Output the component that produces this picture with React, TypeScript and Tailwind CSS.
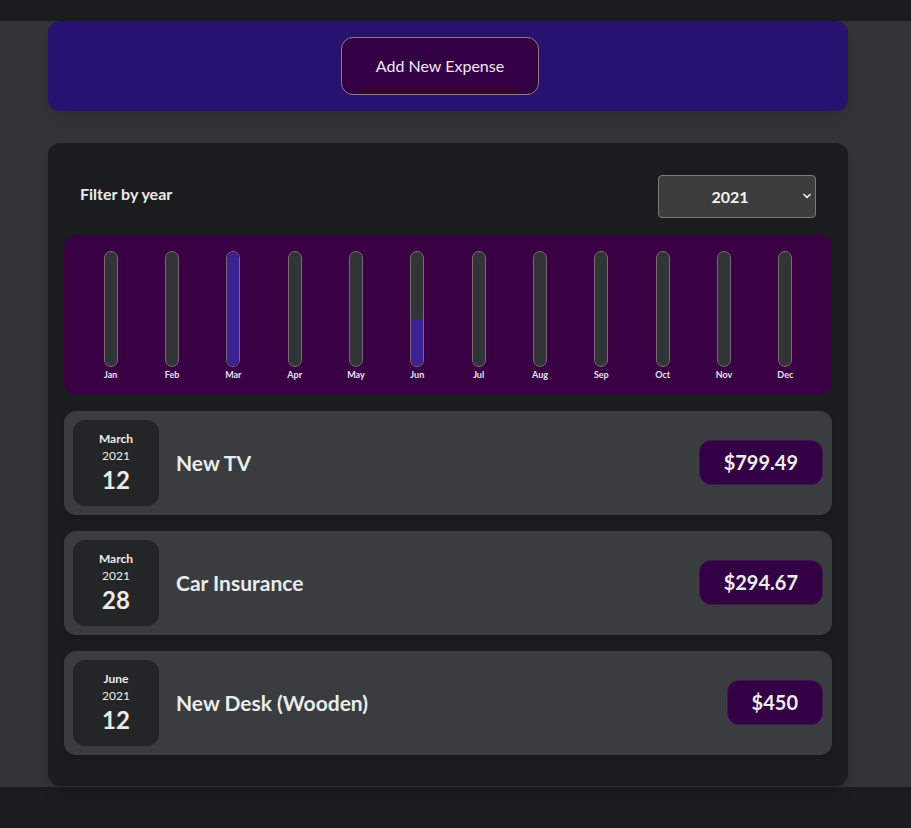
import { useState } from "react";

const months = ["Jan", "Feb", "Mar", "Apr", "May", "Jun", "Jul", "Aug", "Sep", "Oct", "Nov", "Dec"];

const expenses = [
    { id: "e1", title: "New TV", amount: 799.49, date: new Date(2021, 2, 12) },
    { id: "e2", title: "Car Insurance", amount: 294.67, date: new Date(2021, 2, 28) },
    { id: "e3", title: "New Desk (Wooden)", amount: 450, date: new Date(2021, 5, 12) },
];

function ExpenseDate({ date }: { date: Date }) {
    const month = date.toLocaleString("en-US", { month: "long" });
    return (
        <div className="flex h-[86px] w-[86px] shrink-0 flex-col items-center justify-center rounded-xl bg-[#242526] text-[#ececec]">
            <div className="text-[12px] font-bold leading-[16px]">{month}</div>
            <div className="text-[12px] leading-[18px]">{date.getFullYear()}</div>
            <div className="text-[24px] font-bold leading-[30px]">{date.getDate()}</div>
        </div>
    );
}

function ExpenseItem({ title, amount, date }: { title: string; amount: number; date: Date }) {
    return (
        <div className="flex items-center rounded-xl bg-[#393d40] p-[9px] shadow-md">
            <ExpenseDate date={date} />
            <h2 className="ml-[17px] flex-1 text-[21px] font-bold text-[#ececec]">{title}</h2>
            <div className="rounded-xl border border-[#3c1a4a] bg-[#330046] px-6 py-[9px] text-[20px] font-bold leading-[25px] text-[#ececec]">
                ${amount}
            </div>
        </div>
    );
}

function Chart() {
    const totals = months.map((_, i) =>
        expenses.filter((e) => e.date.getMonth() === i).reduce((s, e) => s + e.amount, 0)
    );
    const max = Math.max(...totals);

    return (
        <div className="grid grid-cols-12 rounded-xl bg-[#3a0044] px-4 pt-4 pb-[13px]">
            {months.map((m, i) => (
                <div key={m} className="flex flex-col items-center">
                    <div className="flex h-[116px] w-[14px] flex-col justify-end overflow-hidden rounded-full border border-[#7c6a72] bg-[#323537]">
                        <div className="bg-[#3b2192]" style={{ height: `${Math.round((totals[i] / max) * 100)}%` }} />
                    </div>
                    <div className="mt-[1px] text-[9px] font-bold text-[#e6e2f2]">{m}</div>
                </div>
            ))}
        </div>
    );
}

export default function App() {
    const [year, setYear] = useState("2021");

    return (
        <div className="min-h-[828px] bg-[#1b1c1e] pt-[21px] pb-[41px] font-['Lato',sans-serif]">
            <div className="bg-[#313537] pb-[1px]">
                {/* New expense */}
                <div className="ml-12 flex h-[90px] w-[800px] items-center justify-center rounded-xl bg-[#27126f] shadow-lg">
                    <button className="mr-4 h-[58px] w-[198px] rounded-xl border border-[#8d7c86] bg-[#330044] text-[16px] text-[#f2e8f2]">
                        Add New Expense
                    </button>
                </div>

                {/* Expenses */}
                <div className="ml-12 mt-[32px] w-[800px] rounded-xl bg-[#1b1c1e] px-4 pt-4 pb-[31px] shadow-lg">
                    <div className="flex items-center justify-between p-4 pb-[17px]">
                        <label className="mb-[5px] text-[16px] font-bold text-[#ececec]">Filter by year</label>
                        <div className="relative">
                            <select
                                value={year}
                                onChange={(e) => setYear(e.target.value)}
                                className="h-[43px] w-[158px] appearance-none rounded border border-[#7a7a7a] bg-[#3d3d3d] pr-[14px] text-center text-[16px] font-bold text-[#f2f2f2]"
                            >
                                <option value="2022">2022</option>
                                <option value="2021">2021</option>
                                <option value="2020">2020</option>
                                <option value="2019">2019</option>
                            </select>
                            <svg className="pointer-events-none absolute right-[5px] top-[18px] h-[6px] w-[8px]" viewBox="0 0 8 6" fill="none">
                                <path d="M1 1.5l3 3 3-3" stroke="#f2f2f2" strokeWidth={1.6} strokeLinecap="round" strokeLinejoin="round" />
                            </svg>
                        </div>
                    </div>

                    <Chart />

                    <ul className="mt-4 flex flex-col gap-4">
                        {expenses.map((e) => (
                            <li key={e.id}>
                                <ExpenseItem title={e.title} amount={e.amount} date={e.date} />
                            </li>
                        ))}
                    </ul>
                </div>
            </div>
        </div>
    );
}
